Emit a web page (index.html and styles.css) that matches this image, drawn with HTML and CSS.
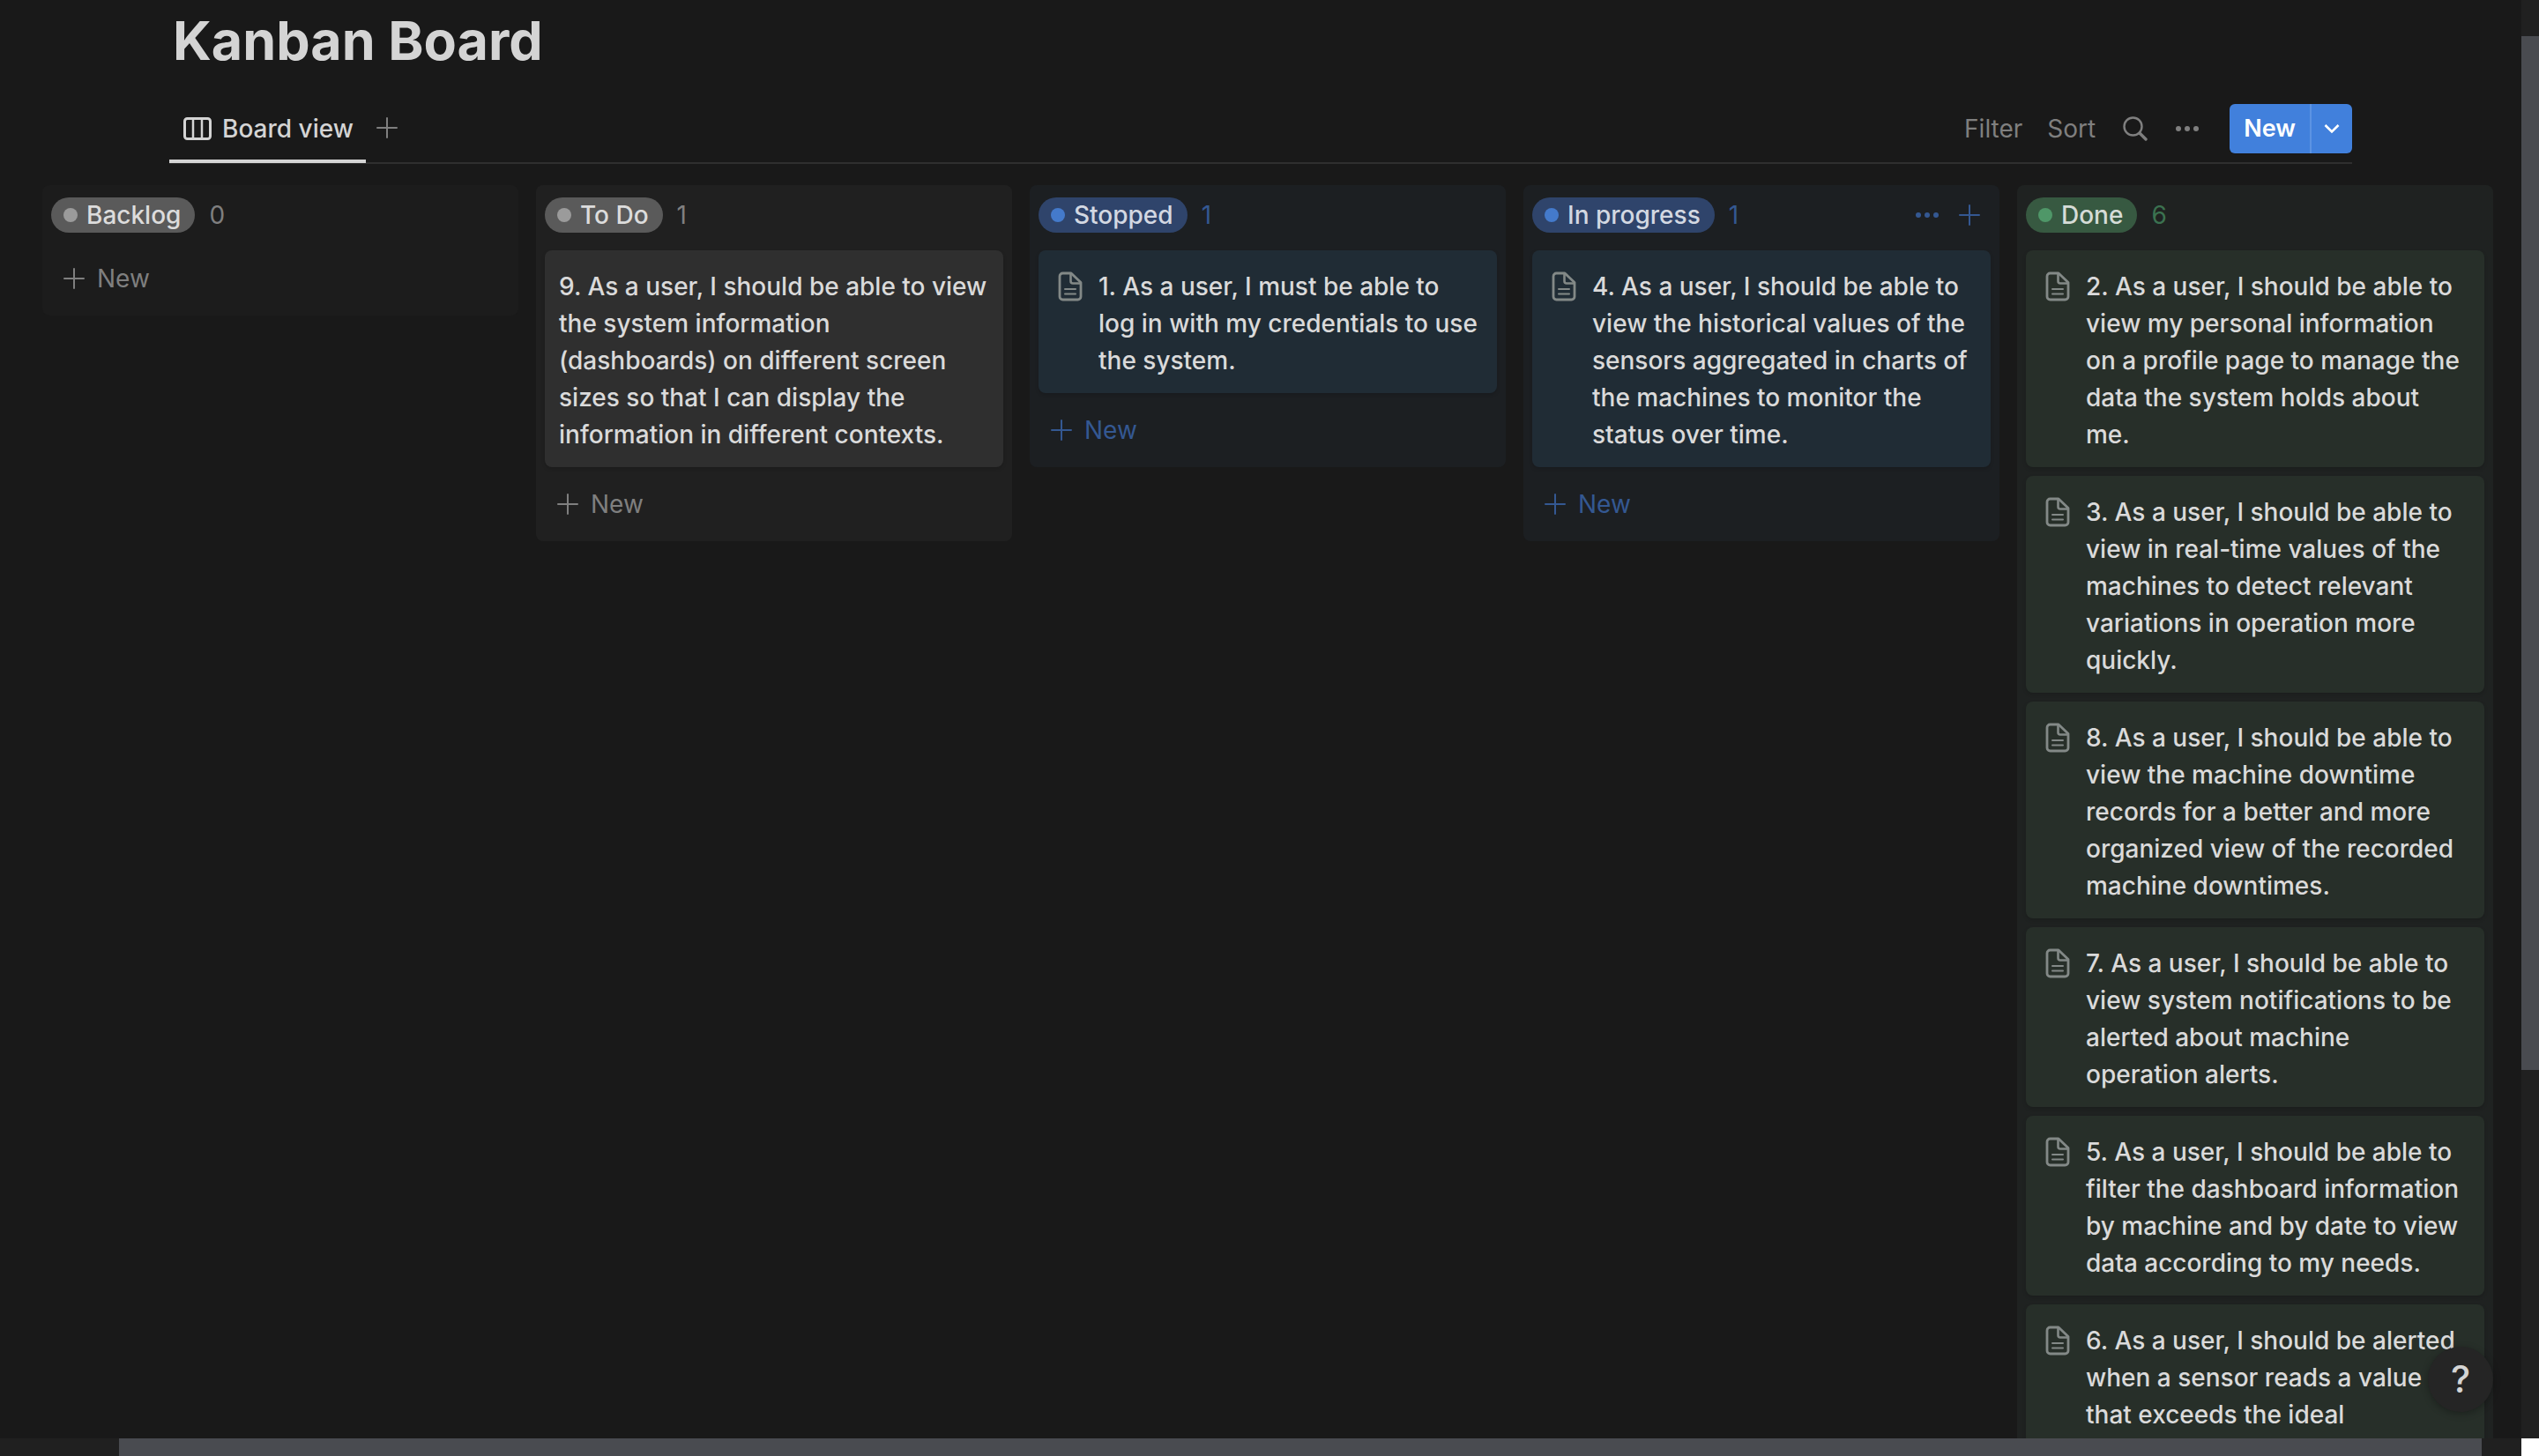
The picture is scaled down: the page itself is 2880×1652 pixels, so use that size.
FILE: index.html
```html
<!DOCTYPE html>
<html lang="en">
<head>
<meta charset="utf-8">
<title>Kanban Board</title>
<link rel="stylesheet" href="styles.css">
</head>
<body>
<svg width="0" height="0" class="sprite" aria-hidden="true">
  <symbol id="plus" viewBox="0 0 24 24"><path d="M12 1v22M1 12h22" fill="none" stroke="currentColor" stroke-width="2" stroke-linecap="round"/></symbol>
  <symbol id="dots" viewBox="0 0 28 28"><g fill="currentColor"><circle cx="4" cy="14" r="3"/><circle cx="14" cy="14" r="3"/><circle cx="24" cy="14" r="3"/></g></symbol>
  <symbol id="page" viewBox="0 0 28 34"><path d="M5.500 2H15L26 12.500V28.500a3.500 3.500 0 0 1-3.500 3.500H5.500a3.500 3.500 0 0 1-3.500-3.500V5.500a3.500 3.500 0 0 1 3.500-3.500Z" fill="none" stroke="currentColor" stroke-width="2.800" stroke-linejoin="round"/><path d="M14.500 2V11a2.500 2.500 0 0 0 2.500 2.500H26" fill="none" stroke="currentColor" stroke-width="2.600"/><path d="M8 20h12M8 25.500h12" stroke="currentColor" stroke-width="2" stroke-linecap="round"/></symbol>
</svg>
<div class="app">
  <main class="page">
    <div class="head">
      <h1 class="title">Kanban Board</h1>
      <div class="toolbar">
        <a class="tab" href="#board">
          <svg class="i-board" viewBox="0 0 32 26" aria-hidden="true"><rect x="1.500" y="1.500" width="29" height="23" rx="3" fill="none" stroke="currentColor" stroke-width="3"/><path d="M11 2v22M21 2v22" stroke="currentColor" stroke-width="2.500"/></svg>
          Board view</a>
        <button class="icon-btn add-view" aria-label="Add view"><svg class="i-plus" aria-hidden="true"><use href="#plus"/></svg></button>
        <div class="tools">
          <button class="text-btn">Filter</button>
          <button class="text-btn">Sort</button>
          <button class="icon-btn" aria-label="Search"><svg class="i-search" viewBox="0 0 28 28" aria-hidden="true"><circle cx="11.500" cy="11.500" r="10" fill="none" stroke="currentColor" stroke-width="2.400"/><path d="M19 19l7 7" stroke="currentColor" stroke-width="3.400" stroke-linecap="round"/></svg></button>
          <button class="icon-btn" aria-label="More"><svg class="i-dots" aria-hidden="true"><use href="#dots"/></svg></button>
          <div class="split">
            <button class="split-main">New</button>
            <button class="split-more" aria-label="New options"><svg class="i-chev" viewBox="0 0 18 12" aria-hidden="true"><path d="M1.500 2L9 9.500 16.500 2" fill="none" stroke="currentColor" stroke-width="2.600"/></svg></button>
          </div>
        </div>
      </div>
    </div>

    <div class="board" id="board">
      <section class="col backlog">
        <header class="col-head"><h2 class="pill">Backlog</h2><span class="count">0</span></header>
        <div class="stack">
          <button class="new"><svg class="i-plus" aria-hidden="true"><use href="#plus"/></svg>New</button>
        </div>
      </section>

      <section class="col todo">
        <header class="col-head"><h2 class="pill">To Do</h2><span class="count">1</span></header>
        <div class="stack">
          <article class="card plain"><p>9. As a user, I should be able to view the system information (dashboards) on different screen sizes so that I can display the information in different contexts.</p></article>
          <button class="new"><svg class="i-plus" aria-hidden="true"><use href="#plus"/></svg>New</button>
        </div>
      </section>

      <section class="col blue">
        <header class="col-head"><h2 class="pill">Stopped</h2><span class="count">1</span></header>
        <div class="stack">
          <article class="card"><svg class="i-page" aria-hidden="true"><use href="#page"/></svg><p>1. As a user, I must be able to log in with my credentials to use the system.</p></article>
          <button class="new"><svg class="i-plus" aria-hidden="true"><use href="#plus"/></svg>New</button>
        </div>
      </section>

      <section class="col blue">
        <header class="col-head"><h2 class="pill">In progress</h2><span class="count">1</span>
          <div class="col-tools">
            <button class="icon-btn" aria-label="Column options"><svg class="i-dots" aria-hidden="true"><use href="#dots"/></svg></button>
            <button class="icon-btn" aria-label="Add card"><svg class="i-plus" aria-hidden="true"><use href="#plus"/></svg></button>
          </div>
        </header>
        <div class="stack">
          <article class="card"><svg class="i-page" aria-hidden="true"><use href="#page"/></svg><p>4. As a user, I should be able to view the historical values of the sensors aggregated in charts of the machines to monitor the status over time.</p></article>
          <button class="new"><svg class="i-plus" aria-hidden="true"><use href="#plus"/></svg>New</button>
        </div>
      </section>

      <section class="col green">
        <header class="col-head"><h2 class="pill">Done</h2><span class="count">6</span></header>
        <div class="stack">
          <article class="card"><svg class="i-page" aria-hidden="true"><use href="#page"/></svg><p>2. As a user, I should be able to view my personal information on a profile page to manage the data the system holds about me.</p></article>
          <article class="card"><svg class="i-page" aria-hidden="true"><use href="#page"/></svg><p>3. As a user, I should be able to view in real-time values of the machines to detect relevant variations in operation more quickly.</p></article>
          <article class="card"><svg class="i-page" aria-hidden="true"><use href="#page"/></svg><p>8. As a user, I should be able to view the machine downtime records for a better and more organized view of the recorded machine downtimes.</p></article>
          <article class="card"><svg class="i-page" aria-hidden="true"><use href="#page"/></svg><p>7. As a user, I should be able to view system notifications to be alerted about machine operation alerts.</p></article>
          <article class="card"><svg class="i-page" aria-hidden="true"><use href="#page"/></svg><p>5. As a user, I should be able to filter the dashboard information by machine and by date to view data according to my needs.</p></article>
          <article class="card"><svg class="i-page" aria-hidden="true"><use href="#page"/></svg><p>6. As a user, I should be alerted when a sensor reads a value<br>that exceeds the ideal</p></article>
        </div>
      </section>
    </div>
    <button class="help" aria-label="Help">?</button>
  </main>
  <div class="vbar"><div class="vthumb"></div></div>
  <div class="hbar"><div class="hthumb"></div></div>
  <div class="corner"></div>
</div>
</body>
</html>
```
FILE: styles.css
```css
* { box-sizing: border-box; }
body { margin: 0; background: #191919; color: #d4d4d4; font: 400 28px/42px Inter, "Liberation Sans", sans-serif; }
h1, h2, p { margin: 0; }
button { border: 0; padding: 0; background: none; color: inherit; font: inherit; cursor: pointer; }
svg { display: block; flex: none; }
.sprite { position: absolute; }

.app { display: grid; grid-template: minmax(0, 1fr) 20px / minmax(0, 1fr) 20px; height: 100vh; }
.page { position: relative; overflow: hidden; }

.head { padding: 0 192px; }
.title { padding: 8px 4px 0; font-size: 61px; line-height: 76px; font-weight: 700; }
.toolbar { display: flex; align-items: center; height: 80px; margin-top: 22px; border-bottom: 2px solid #2f2f2f; }
.tab { display: flex; align-items: center; gap: 12px; height: 80px; padding: 6px 14px 0 16px; border-bottom: 4px solid #d4d4d4; color: inherit; font-weight: 500; text-decoration: none; }
.add-view { margin-left: 12px; }
.icon-btn { display: flex; color: #7f7f7f; }
.tools { display: flex; align-items: center; gap: 28px; margin-left: auto; padding-top: 2px; }
.tools .icon-btn { margin-left: 3px; }
.text-btn { color: #7f7f7f; }
.split { display: flex; height: 56px; margin-left: 6px; border-radius: 6px; background: #4180dc; color: #fff; font-size: 27px; font-weight: 600; overflow: hidden; }
.split-main { padding: 0 16px; }
.split-more { display: flex; align-items: center; justify-content: center; width: 48px; border-left: 2px solid #5c93e3; }

.i-plus { width: 24px; height: 24px; }
.i-dots { width: 28px; height: 28px; }
.i-board { width: 32px; height: 26px; }
.i-search { width: 28px; height: 28px; }
.i-chev { width: 18px; height: 12px; }
.i-page { width: 28px; height: 34px; margin-top: 4px; color: #838987; }

.board { display: grid; grid-template-columns: repeat(5, minmax(0, 1fr)); gap: 20px; align-items: start; margin-top: 24px; padding: 0 32px 0 48px; }
.col { padding: 14px 10px 10px; border-radius: 8px; background: var(--bg); color: var(--accent); }
.col-head { display: flex; align-items: center; gap: 16px; height: 40px; margin-bottom: 20px; }
.pill { display: flex; align-items: center; gap: 10px; height: 40px; padding: 0 16px 0 14px; border-radius: 20px; background: var(--pill); color: var(--pilltext); font-size: 28px; font-weight: 500; white-space: nowrap; }
.pill::before { content: ""; width: 16px; height: 16px; border-radius: 50%; background: var(--dot); }
.col-tools { display: flex; align-items: center; gap: 22px; margin-left: auto; padding-right: 12px; }
.col-tools .icon-btn { color: inherit; }
.stack { display: flex; flex-direction: column; gap: 10px; }
.card { display: flex; gap: 18px; padding: 20px 22px 16px; border-radius: 8px; background: var(--card); color: #dadada; font-weight: 500; box-shadow: 0 2px 4px rgba(0, 0, 0, .15); }
.plain { padding: 20px 16px 16px; }
.new { display: flex; align-items: center; gap: 14px; height: 64px; padding: 0 14px; }

.backlog { --bg: #1c1c1c; --accent: #7f7f7f; --pill: #5a5a5a; --pilltext: #dcdcdc; --dot: #9b9b9b; }
.todo { --bg: #202020; --accent: #7f7f7f; --pill: #5a5a5a; --pilltext: #dcdcdc; --dot: #9b9b9b; --card: #2f2f2f; }
.blue { --bg: #1c1f22; --accent: #345892; --pill: #2f446b; --pilltext: #d3d8e2; --dot: #447acb; --card: #202c35; }
.green { --bg: #1f2221; --accent: #3b7250; --pill: #375941; --pilltext: #d5dcd7; --dot: #4f9768; --card: #272f29; }

.help { position: absolute; right: 32px; bottom: 30px; width: 74px; height: 74px; border-radius: 50%; background: #252525; color: #d4d4d4; font-size: 42px; font-weight: 500; box-shadow: 0 2px 8px rgba(0, 0, 0, .3); }

.vbar, .hbar { background: #202020; }
.vbar { padding-top: 41px; }
.vthumb { height: 73.7%; background: #494b50; }
.hbar { padding: 0 45px 0 135px; }
.hthumb { height: 20px; background: #494b50; }
.corner { background: #fff; }
```
